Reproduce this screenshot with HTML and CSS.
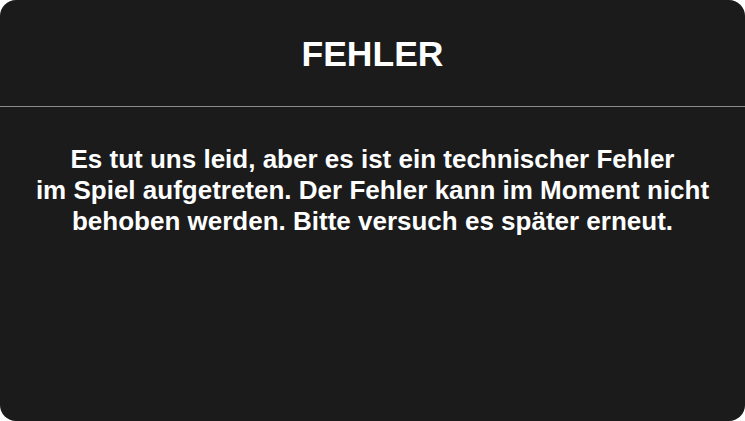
FILE: index.html
```html
<!DOCTYPE html>
<html lang="de">
<head>
<meta charset="utf-8">
<link rel="stylesheet" href="styles.css">
</head>
<body>
<div class="card">
  <div class="header"><h1 class="title">FEHLER</h1></div>
  <div class="body">
    <p class="message">Es tut uns leid, aber es ist ein technischer Fehler<br>im Spiel aufgetreten. Der Fehler kann im Moment nicht<br>behoben werden. Bitte versuch es später erneut.</p>
  </div>
</div>
</body>
</html>
```
FILE: styles.css
```css
html, body {
  margin: 0;
  padding: 0;
  background: #ffffff;
}
.card {
  width: 745px;
  height: 421px;
  box-sizing: border-box;
  background: #1b1b1b;
  border-radius: 16px;
  font-family: "Liberation Sans", Arial, sans-serif;
  color: #ffffff;
  display: flex;
  flex-direction: column;
}
.header {
  height: 107px;
  box-sizing: border-box;
  padding-top: 37px;
  border-bottom: 1px solid #8a8a8a;
  text-align: center;
}
.title {
  margin: 0;
  font-size: 35.5px;
  font-weight: bold;
  line-height: 35.5px;
}
.body {
  padding: 37px 10px 0;
}
.message {
  margin: 0;
  text-align: center;
  font-size: 26px;
  font-weight: bold;
  line-height: 31px;
}
```
